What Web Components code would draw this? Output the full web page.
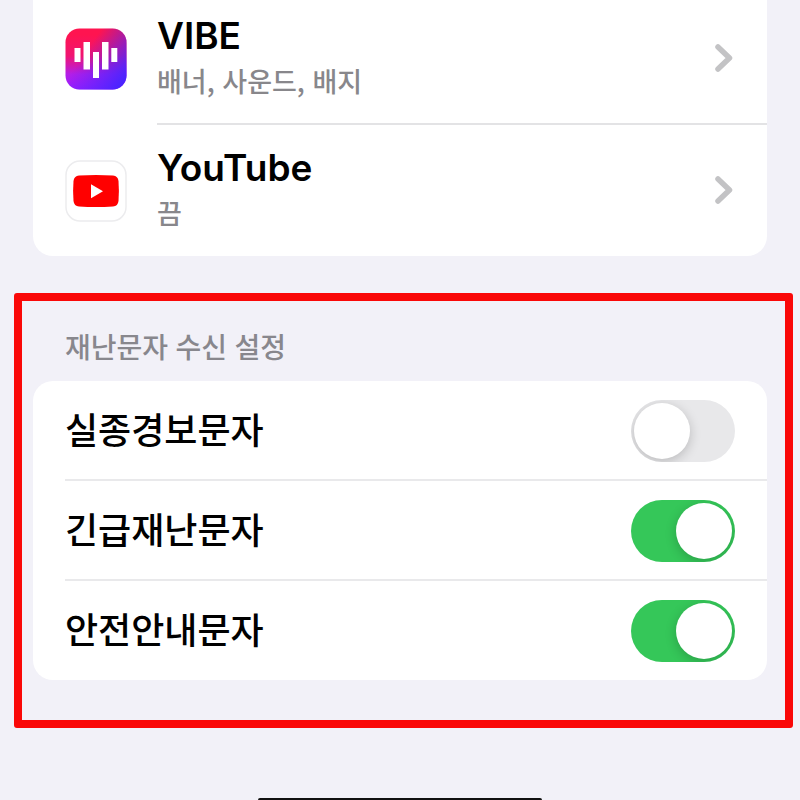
<!DOCTYPE html>
<html lang="ko">
<head>
<meta charset="utf-8">
<meta name="viewport" content="width=device-width, initial-scale=1">
<title>알림</title>
<style>
  body {
    margin: 0;
    background: #f2f1f8;
    color: #000;
    font-family: Inter, "Noto Sans CJK KR", sans-serif;
  }
</style>
</head>
<body>
<settings-page>
  <settings-card class="apps">
    <app-row name="VIBE" detail="배너, 사운드, 배지"><vibe-icon></vibe-icon></app-row>
    <app-row name="YouTube" detail="끔" last><youtube-icon></youtube-icon></app-row>
  </settings-card>
  <highlight-frame>
    <settings-group heading="재난문자 수신 설정">
      <switch-row label="실종경보문자"></switch-row>
      <switch-row label="긴급재난문자" on></switch-row>
      <switch-row label="안전안내문자" on last></switch-row>
    </settings-group>
  </highlight-frame>
</settings-page>

<script>
  const define = (name, html, setup) => {
    const template = document.createElement('template');
    template.innerHTML = html;
    customElements.define(name, class extends HTMLElement {
      constructor() {
        super();
        this.attachShadow({ mode: 'open' }).append(template.content.cloneNode(true));
      }
      connectedCallback() {
        if (setup) setup(this, this.shadowRoot);
      }
    });
  };

  define('settings-page', `
    <style>
      :host { display: flex; flex-direction: column; min-height: 100vh; overflow: hidden; }
      main { margin-top: -7px; display: flex; flex-direction: column; }
      ::slotted(.apps) { margin: 0 33px 37px; border-radius: 0 0 20px 20px; }
      .home { width: 284px; height: 2px; margin: auto auto 0; background: #111; border-radius: 4px 4px 0 0; }
    </style>
    <main><slot></slot></main>
    <div class="home"></div>`);

  define('settings-card', `
    <style>
      :host { display: block; background: #fff; border-radius: 20px; overflow: hidden; }
    </style>
    <slot></slot>`);

  define('highlight-frame', `
    <style>
      :host { display: block; margin: 0 7px 0 14px; border: 8px solid #fa0808; border-radius: 3px; padding: 24px 18px 40px 11px; }
    </style>
    <slot></slot>`);

  define('settings-group', `
    <style>
      :host { display: block; }
      h2 { margin: 0 32px 10px; font-size: 28px; line-height: 46px; font-weight: 500; color: #88878d; }
    </style>
    <section aria-labelledby="heading">
      <h2 id="heading"></h2>
      <settings-card><slot></slot></settings-card>
    </section>`,
    (host, root) => { root.querySelector('h2').textContent = host.getAttribute('heading'); });

  define('app-row', `
    <style>
      :host { display: block; }
      a { display: flex; align-items: stretch; gap: 30px; padding-left: 32px; color: inherit; text-decoration: none; }
      .icon { display: flex; align-items: center; }
      .body { flex: 1; display: flex; align-items: center; justify-content: space-between; padding: 20px 33px 20px 0; border-bottom: 2px solid #e3e3e5; }
      :host([last]) .body { border-bottom: 0; padding-bottom: 21px; }
      .text { display: flex; flex-direction: column; }
      .name { font-size: 37px; line-height: 46px; font-weight: 600; }
      .detail { font-family: "Noto Sans CJK KR", sans-serif; font-size: 27px; line-height: 44px; font-weight: 500; color: #88878b; }
      svg { display: block; width: 20px; height: 30px; }
    </style>
    <a href="#">
      <span class="icon"><slot></slot></span>
      <span class="body">
        <span class="text"><span class="name"></span><span class="detail"></span></span>
        <svg viewBox="0 0 20 30" aria-hidden="true"><path d="M4 4 15.500 15 4 26" fill="none" stroke="#c3c3c5" stroke-width="5.500" stroke-linecap="round" stroke-linejoin="round"/></svg>
      </span>
    </a>`,
    (host, root) => {
      root.querySelector('.name').textContent = host.getAttribute('name');
      root.querySelector('.detail').textContent = host.getAttribute('detail');
    });

  define('switch-row', `
    <style>
      :host { display: block; padding-left: 32px; }
      .row { display: flex; align-items: center; justify-content: space-between; padding: 19px 32px 17px 0; border-bottom: 2px solid #e9e9eb; }
      :host([last]) .row { border-bottom: 0; padding-bottom: 18px; }
      label { font-size: 36px; line-height: 56px; font-weight: 500; }
      input {
        appearance: none; box-sizing: border-box; flex: none; display: flex; align-items: center;
        width: 104px; height: 62px; margin: 0; padding: 0 3px; border-radius: 31px;
        background: #e8e8ea; overflow: hidden; cursor: pointer;
      }
      input::before {
        content: ""; width: 56px; height: 56px; border-radius: 50%; background: #fff;
        box-shadow: 0 3px 12px rgba(0, 0, 0, .2);
      }
      input:checked { background: #35c759; justify-content: flex-end; }
    </style>
    <div class="row">
      <label for="toggle"></label>
      <input id="toggle" type="checkbox" role="switch">
    </div>`,
    (host, root) => {
      root.querySelector('label').textContent = host.getAttribute('label');
      root.querySelector('input').checked = host.hasAttribute('on');
    });

  define('vibe-icon', `
    <style>:host, svg { display: block; width: 62px; height: 62px; }</style>
    <svg viewBox="0 0 62 62" aria-hidden="true">
      <defs>
        <linearGradient id="base" x1="0" y1="0" x2="0" y2="1">
          <stop offset=".1" stop-color="#ff1450"/><stop offset=".45" stop-color="#f01472"/>
          <stop offset=".75" stop-color="#b41ee8"/><stop offset="1" stop-color="#a01eff"/>
        </linearGradient>
        <linearGradient id="side" x1=".35" y1=".35" x2="1" y2=".8">
          <stop offset="0" stop-color="#4a24ff" stop-opacity="0"/><stop offset="1" stop-color="#4a24ff"/>
        </linearGradient>
      </defs>
      <rect x=".5" y=".5" width="61" height="61" rx="14" fill="url(#base)"/>
      <rect x=".5" y=".5" width="61" height="61" rx="14" fill="url(#side)"/>
      <path fill="#fff" d="M9.500 20h6v14h-6zM18.500 14h6.500v27.500h-6.500zM28 24h6v26h-6zM37 14h6.500v27.500H37zM46.300 20h6v14h-6z"/>
    </svg>`);

  define('youtube-icon', `
    <style>:host, svg { display: block; width: 62px; height: 62px; }</style>
    <svg viewBox="0 0 62 62" aria-hidden="true">
      <rect x="1" y="1" width="60" height="60" rx="14" fill="#fff" stroke="#ececee" stroke-width="1.500"/>
      <path fill="#f00" d="M14 15.500Q31 14.500 48 15.500Q53 16 53.500 21Q54.300 31 53.500 41Q53 46 48 46.500Q31 47.500 14 46.500Q9 46 8.500 41Q7.700 31 8.500 21Q9 16 14 15.500Z"/>
      <path fill="#fff" d="M26 24.300v14L38 31.300z"/>
    </svg>`);
</script>
</body>
</html>
